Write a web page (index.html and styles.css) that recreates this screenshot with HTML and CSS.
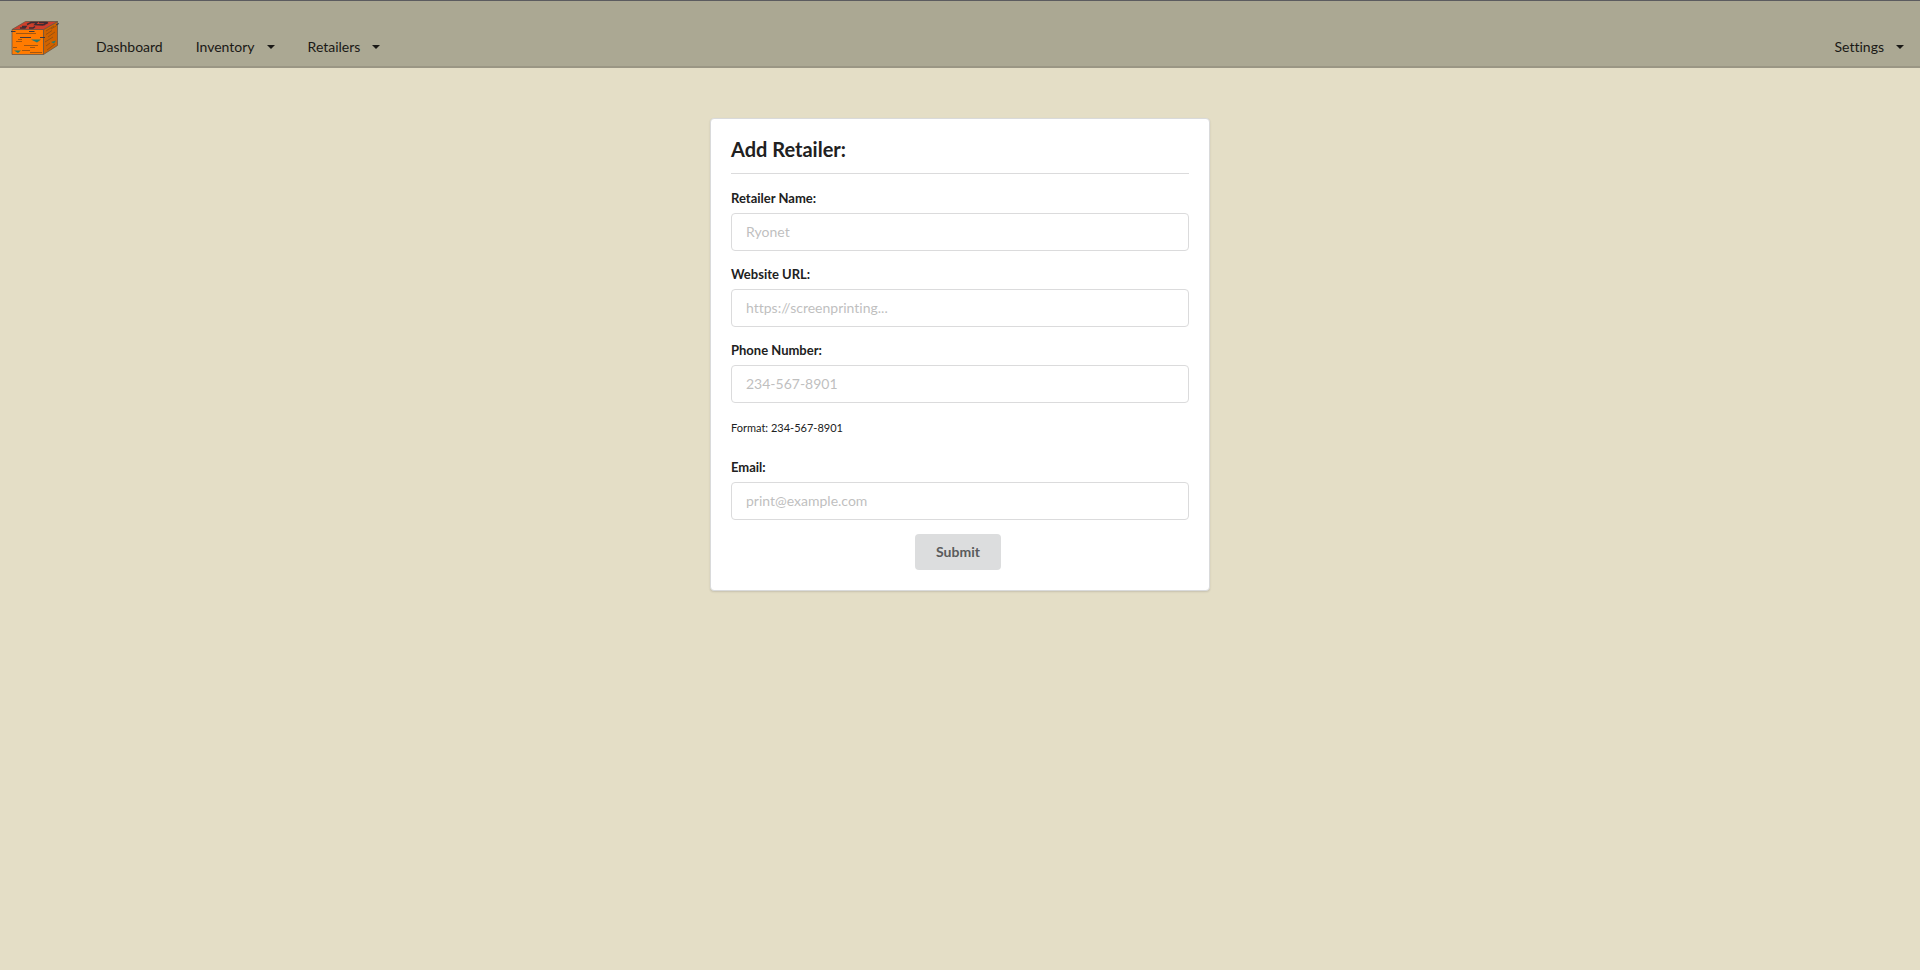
FILE: index.html
```html
<!DOCTYPE html>
<html lang="en">
<head>
<meta charset="utf-8">
<title>Add Retailer</title>
<link rel="stylesheet" href="styles.css">
</head>
<body>
<nav class="menu">
  <a class="brand" href="#" aria-label="Home">
    <svg class="logo" viewBox="0 0 50 36" width="50" height="36" aria-hidden="true">
      <g stroke="#6b5544" stroke-width=".8" stroke-linejoin="round">
        <path fill="#ff7b00" d="M2 9.500H33.500V34.500H2z"/>
        <path fill="#cf6200" d="M33.500 9.500 47.500 1.500V25.500L33.500 34.500z"/>
        <path fill="#cf3f2b" d="M2 9.500 15.500 1.500H47.500L33.500 9.500z"/>
      </g>
      <g fill="none" stroke="#402c33" stroke-width="1.500">
        <path d="M10 8h5l1-1.500h-4M19 8h4l2-1.500M17 4.500l4-2h6l-2 2 8 .5 5-2.500M29 2.500h8M30 5l5-.5"/>
      </g>
      <g fill="none" stroke="#283246" stroke-width=".9">
        <path d="M1 11.500h4.500M19 11.500h5.500M10 17.500h11M30 17.500h5M46 5l3-1.500"/>
      </g>
      <g fill="none" stroke="#8a4d14" stroke-width=".8">
        <path d="M6 13.500h20M6 21.500h6M8 19.500h4M14 25.500h14M3 27.500h4M20 27.500h5M12 30.500h8M20 32.500h12M36 11l8-5M36 14.500l6-4M38 17l7-5M35 22l8-5M36 26l4-3M37 30l8-6M41 9l5-3"/>
      </g>
      <g fill="#277b70">
        <path d="M21 19.500h10l-4 3zM4 30.500h7l-3 2.500zM41 22l5-1.500-2 3z"/>
      </g>
    </svg>
  </a>
  <a class="item" href="#">Dashboard</a>
  <button class="item" type="button">Inventory <svg class="caret" viewBox="0 0 8 4" width="8" height="4" aria-hidden="true"><path d="M0 0h8L4 4z"/></svg></button>
  <button class="item" type="button">Retailers <svg class="caret" viewBox="0 0 8 4" width="8" height="4" aria-hidden="true"><path d="M0 0h8L4 4z"/></svg></button>
  <button class="item item-right" type="button">Settings <svg class="caret" viewBox="0 0 8 4" width="8" height="4" aria-hidden="true"><path d="M0 0h8L4 4z"/></svg></button>
</nav>
<main class="page">
  <form class="segment">
    <h1 class="header">Add Retailer:</h1>
    <div class="field">
      <label for="name">Retailer Name:</label>
      <input id="name" type="text" placeholder="Ryonet">
    </div>
    <div class="field">
      <label for="url">Website URL:</label>
      <input id="url" type="url" placeholder="https://screenprinting...">
    </div>
    <div class="field">
      <label for="phone">Phone Number:</label>
      <input id="phone" type="tel" placeholder="234-567-8901" aria-describedby="format">
    </div>
    <p class="hint" id="format">Format: 234-567-8901</p>
    <div class="field">
      <label for="email">Email:</label>
      <input id="email" type="email" placeholder="print@example.com">
    </div>
    <div class="actions"><button class="submit" type="submit">Submit</button></div>
  </form>
</main>
</body>
</html>
```
FILE: styles.css
```css
* { box-sizing: border-box; }

body {
  margin: 0;
  min-height: 100vh;
  background: #e4dec6;
  color: #212121;
  font: 14px/20px Lato, "Liberation Sans", sans-serif;
  font-variant-ligatures: none;
}

.menu {
  display: flex;
  align-items: stretch;
  min-height: 68px;
  background: #aba893;
  border-top: 1px solid #5b5b5f;
  border-bottom: 2px solid #9a9684;
}

.brand {
  display: flex;
  align-items: center;
  padding: 9px 20px 0 10px;
}

.logo { display: block; }

.item {
  display: flex;
  align-items: flex-end;
  padding: 0 16px 9px;
  border: 0;
  background: none;
  color: #1a1916;
  font: inherit;
  font-variant-ligatures: none;
  text-decoration: none;
  cursor: pointer;
}

.item + .item { margin-left: 1px; }

.item.item-right { margin-left: auto; }

.caret {
  margin: 0 0 8px 12px;
  fill: currentColor;
}

.page {
  display: flex;
  justify-content: center;
  padding: 50px 16px;
}

.segment {
  width: 100%;
  max-width: 500px;
  padding: 20px;
  background: #fff;
  border: 1px solid #d9dadb;
  border-radius: 4px;
  box-shadow: 0 1px 2px rgba(34, 36, 38, .15);
}

.header {
  margin: 0 0 14px;
  padding-bottom: 14px;
  border-bottom: 1px solid #dbdbdc;
  font-size: 20px;
  line-height: 20px;
}

.field { margin-bottom: 13px; }

.field label {
  display: block;
  margin-bottom: 5px;
  font-size: 13px;
  font-weight: 700;
}

.field input {
  display: block;
  width: 100%;
  height: 38px;
  padding: 0 14px 2px;
  border: 1px solid #dbdbdc;
  border-radius: 4px;
  background: #fff;
  color: inherit;
  font: inherit;
  font-variant-ligatures: none;
}

.field input::placeholder { color: #bfbfbf; opacity: 1; }

.hint {
  margin: 15px 0 19px;
  font-size: 11px;
}

.actions {
  display: flex;
  justify-content: center;
  padding: 1px 4px 0 0;
}

.submit {
  height: 36px;
  padding: 0 21px;
  border: 0;
  border-radius: 4px;
  background: #dcddde;
  color: #5a5b5c;
  font: inherit;
  font-weight: 700;
}
```
